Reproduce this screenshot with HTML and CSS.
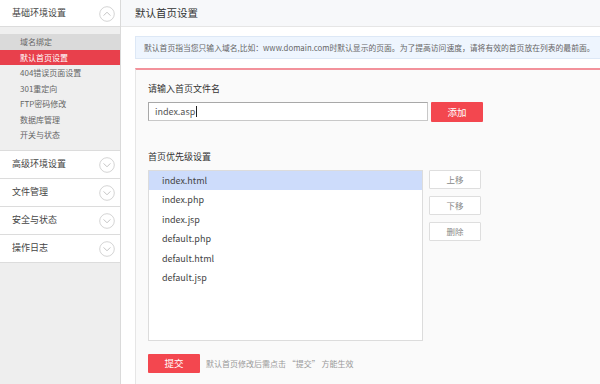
FILE: index.html
```html
<!DOCTYPE html>
<html lang="zh-CN">
<head>
<meta charset="utf-8">
<link rel="stylesheet" href="styles.css">
</head>
<body>
<div class="page">
  <aside class="sidebar">
    <div class="group open">
      <div class="group-head"><span>基础环境设置</span>
        <svg class="chev" viewBox="0 0 16 16" width="16" height="16"><circle cx="8" cy="8" r="7.3" fill="#fff" stroke="#cfcfcf" stroke-width="0.9"/><path d="M4.6 9.6 L8 6.2 L11.4 9.6" fill="none" stroke="#bdbdbd" stroke-width="0.9"/></svg>
      </div>
      <ul class="submenu">
        <li class="hover">域名绑定</li>
        <li class="active">默认首页设置</li>
        <li>404错误页面设置</li>
        <li>301重定向</li>
        <li>FTP密码修改</li>
        <li>数据库管理</li>
        <li>开关与状态</li>
      </ul>
    </div>
    <div class="group"><div class="group-head"><span>高级环境设置</span>
      <svg class="chev" viewBox="0 0 16 16" width="16" height="16"><circle cx="8" cy="8" r="7.3" fill="#fff" stroke="#cfcfcf" stroke-width="0.9"/><path d="M4.6 6.4 L8 9.8 L11.4 6.4" fill="none" stroke="#bdbdbd" stroke-width="0.9"/></svg></div></div>
    <div class="group"><div class="group-head"><span>文件管理</span>
      <svg class="chev" viewBox="0 0 16 16" width="16" height="16"><circle cx="8" cy="8" r="7.3" fill="#fff" stroke="#cfcfcf" stroke-width="0.9"/><path d="M4.6 6.4 L8 9.8 L11.4 6.4" fill="none" stroke="#bdbdbd" stroke-width="0.9"/></svg></div></div>
    <div class="group"><div class="group-head"><span>安全与状态</span>
      <svg class="chev" viewBox="0 0 16 16" width="16" height="16"><circle cx="8" cy="8" r="7.3" fill="#fff" stroke="#cfcfcf" stroke-width="0.9"/><path d="M4.6 6.4 L8 9.8 L11.4 6.4" fill="none" stroke="#bdbdbd" stroke-width="0.9"/></svg></div></div>
    <div class="group"><div class="group-head"><span>操作日志</span>
      <svg class="chev" viewBox="0 0 16 16" width="16" height="16"><circle cx="8" cy="8" r="7.3" fill="#fff" stroke="#cfcfcf" stroke-width="0.9"/><path d="M4.6 6.4 L8 9.8 L11.4 6.4" fill="none" stroke="#bdbdbd" stroke-width="0.9"/></svg></div></div>
  </aside>
  <main class="main">
    <header class="main-head">默认首页设置</header>
    <div class="content">
      <div class="notice">默认首页指当您只输入域名,比如：www.domain.com时默认显示的页面。为了提高访问速度，请将有效的首页放在列表的最前面。</div>
      <section class="panel">
        <div class="label">请输入首页文件名</div>
        <div class="add-row">
          <div class="input"><span>index.asp</span><i class="caret"></i></div>
          <button class="btn-red btn-add">添加</button>
        </div>
        <div class="label label2">首页优先级设置</div>
        <div class="list-row">
          <ul class="list">
            <li class="sel">index.html</li>
            <li>index.php</li>
            <li>index.jsp</li>
            <li>default.php</li>
            <li>default.html</li>
            <li>default.jsp</li>
          </ul>
          <div class="side-btns">
            <button class="btn-light">上移</button>
            <button class="btn-light">下移</button>
            <button class="btn-light">删除</button>
          </div>
        </div>
        <div class="submit-row">
          <button class="btn-red btn-submit">提交</button>
          <span class="hint">默认首页修改后需点击 “提交” 方能生效</span>
        </div>
      </section>
    </div>
  </main>
</div>
</body>
</html>
```

FILE: styles.css
```css
* { box-sizing: border-box; }
html, body { margin: 0; padding: 0; }
body {
  width: 600px;
  height: 384px;
  overflow: hidden;
  font-family: "Noto Sans CJK SC", "Noto Sans", sans-serif;
  color: #333;
  background: #fff;
}
ul { list-style: none; margin: 0; padding: 0; }
button { font-family: inherit; margin: 0; cursor: pointer; }

.page { display: flex; height: 384px; }

/* sidebar */
.sidebar {
  width: 121px;
  flex: none;
  background: #eeeeee;
  border-right: 1px solid #dadada;
}
.group-head {
  height: 27px;
  background: #fff;
  border-bottom: 1px solid #dcdcdc;
  display: flex;
  align-items: center;
  justify-content: space-between;
  padding: 0 5px 0 12px;
  font-size: 9px;
  color: #444;
}
.group-head span { line-height: 12px; }
.group + .group .group-head { height: 28px; }
.chev { display: block; margin-top: 1px; }
.submenu {
  background: #efefef;
  padding: 7px 0 7px;
  border-bottom: 1px solid #dcdcdc;
}
.submenu li {
  height: 15.5px;
  line-height: 15.5px;
  padding-left: 20px;
  font-size: 8px;
  color: #666;
}
.submenu li.hover { background: #dadada; }
.submenu li.active { background: #e8404c; color: #fff; }

/* main */
.main { flex: 1; display: flex; flex-direction: column; min-width: 0; }
.main-head {
  height: 27px;
  flex: none;
  background: #f7f8fa;
  border-bottom: 1px solid #e6e6e6;
  padding-left: 14px;
  font-size: 10.5px;
  line-height: 26px;
  color: #333;
}
.content {
  flex: 1;
  display: flex;
  flex-direction: column;
  padding: 9px 0 0 14px;
}
.notice {
  height: 23px;
  background: #eef5fe;
  border: 1px solid #dde8f6;
  border-right: none;
  padding-left: 8px;
  font-size: 7.8px;
  line-height: 21px;
  color: #666;
  white-space: nowrap;
  overflow: hidden;
}
.panel {
  flex: 1;
  margin-top: 9px;
  background: #fafafa;
  border-top: 2px solid #f3929b;
  border-left: 1px solid #e6e6e6;
  padding: 12px 0 0 12px;
}
.label {
  font-size: 9px;
  line-height: 14px;
  color: #333;
}
.add-row {
  display: flex;
  align-items: flex-start;
  margin-top: 6px;
}
.input {
  width: 280px;
  height: 19px;
  background: #fff;
  border: 1px solid #a8a8a8;
  border-right-color: #c8c8c8;
  border-bottom-color: #c8c8c8;
  padding-left: 6px;
  font-size: 9px;
  line-height: 17px;
  color: #555;
  display: flex;
  align-items: center;
}
.caret {
  display: inline-block;
  width: 1px;
  height: 11px;
  background: #222;
  margin-left: 1px;
}
.btn-red {
  background: #f3474f;
  color: #fff;
  border: none;
  border-radius: 1px;
  font-size: 9.5px;
  width: 52px;
  height: 20px;
  padding: 0;
  line-height: 20px;
}
.btn-add { margin-left: 3px; }
.label2 { margin-top: 28px; }
.list-row {
  display: flex;
  align-items: flex-start;
  margin-top: 6px;
}
.list {
  width: 275px;
  height: 171px;
  background: #fff;
  border: 1px solid #dcdcdc;
}
.list li {
  height: 19.4px;
  line-height: 19.4px;
  padding-left: 13px;
  font-size: 9px;
  color: #444;
}
.list li.sel { background: #cddcfb; }
.side-btns {
  display: flex;
  flex-direction: column;
  gap: 7px;
  margin-left: 6px;
}
.btn-light {
  width: 52px;
  height: 19px;
  background: #fff;
  border: 1px solid #dedede;
  border-radius: 1px;
  color: #888;
  font-size: 8.5px;
  padding: 0;
  line-height: 17px;
}
.submit-row {
  display: flex;
  align-items: center;
  margin-top: 13px;
}
.btn-submit { height: 19px; line-height: 19px; }
.hint {
  margin-left: 6px;
  font-size: 8px;
  color: #999;
}
```
